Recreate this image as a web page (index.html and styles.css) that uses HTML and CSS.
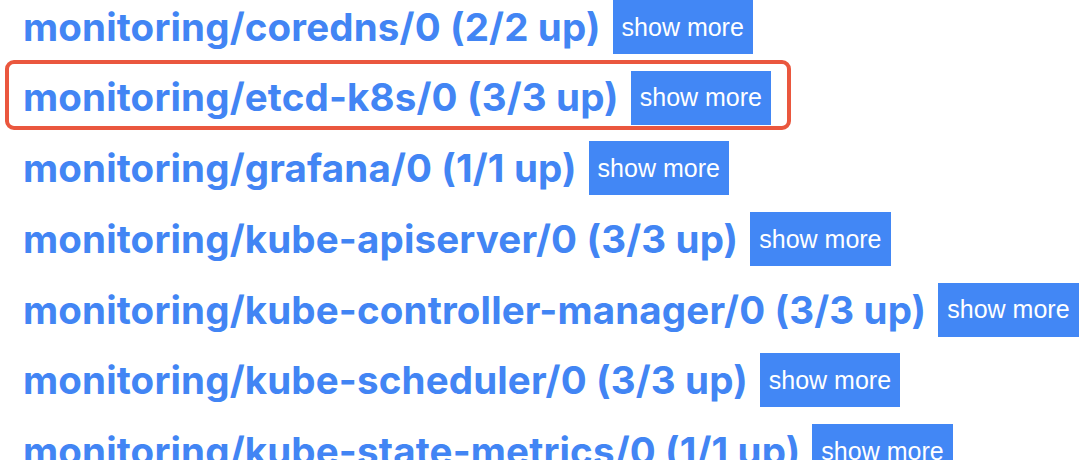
FILE: index.html
```html
<!DOCTYPE html>
<html>
<head>
<meta charset="utf-8">
<link rel="stylesheet" href="styles.css">
</head>
<body>
<div class="list">
  <div class="row"><span class="job">monitoring/coredns/0 (2/2 up)</span><span class="btn">show more</span></div>
  <div class="row highlight"><span class="job">monitoring/etcd-k8s/0 (3/3 up)</span><span class="btn">show more</span></div>
  <div class="row"><span class="job">monitoring/grafana/0 (1/1 up)</span><span class="btn">show more</span></div>
  <div class="row"><span class="job">monitoring/kube-apiserver/0 (3/3 up)</span><span class="btn">show more</span></div>
  <div class="row"><span class="job">monitoring/kube-controller-manager/0 (3/3 up)</span><span class="btn">show more</span></div>
  <div class="row"><span class="job">monitoring/kube-scheduler/0 (3/3 up)</span><span class="btn">show more</span></div>
  <div class="row"><span class="job">monitoring/kube-state-metrics/0 (1/1 up)</span><span class="btn">show more</span></div>
</div>
</body>
</html>
```

FILE: styles.css
```css
html, body {
  margin: 0;
  padding: 0;
  background: #ffffff;
  overflow: hidden;
}
.list {
  display: flex;
  flex-direction: column;
  gap: 16.7px;
  padding-left: 23px;
}
.row {
  display: flex;
  align-items: center;
  gap: 12px;
  height: 54px;
}
.job {
  font-family: Inter, "Liberation Sans", sans-serif;
  font-weight: 700;
  font-size: 38.5px;
  letter-spacing: 0.15px;
  line-height: 1;
  color: #4285f4;
  white-space: nowrap;
}
.btn {
  display: flex;
  align-items: center;
  height: 54px;
  padding: 0 9px;
  background: #4287f5;
  color: #ffffff;
  font-family: "Liberation Sans", Arial, sans-serif;
  font-size: 25px;
  white-space: nowrap;
}
.highlight {
  position: relative;
}
.highlight::before {
  content: "";
  position: absolute;
  left: -18px;
  top: -10.5px;
  width: 786px;
  height: 70px;
  box-sizing: border-box;
  border: 4px solid #ea573e;
  border-radius: 9px;
}
```
